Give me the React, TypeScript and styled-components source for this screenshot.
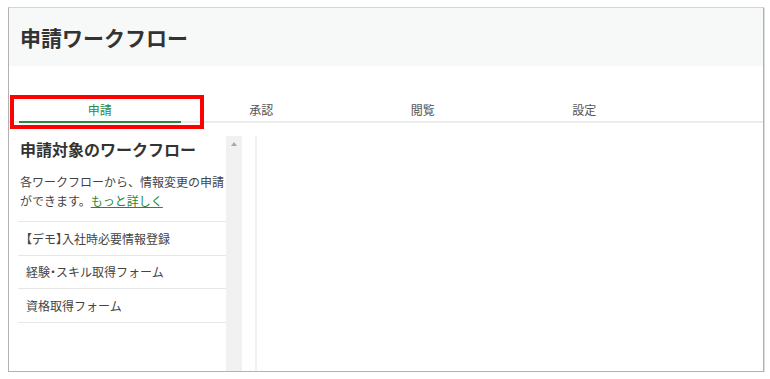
import React, { FC } from 'react';
import styled, { createGlobalStyle } from 'styled-components';

const GlobalStyle = createGlobalStyle`
  html, body {
    margin: 0;
    padding: 0;
    background: #fff;
  }
  body {
    font-family: "Noto Sans CJK JP", "Noto Sans", sans-serif;
    color: #333;
  }
`;

const Frame = styled.div`
  position: relative;
  margin: 7px 0 0 8px;
  width: 756px;
  height: 365px;
  box-sizing: border-box;
  border: 1px solid #b2b2b2;
  border-top-color: #d4d4d4;
  box-shadow: 1px 1px 0 #dcdcdc;
  display: flex;
  flex-direction: column;
  overflow: hidden;
`;

const Header = styled.div`
  height: 58px;
  background-color: #f7f8f8;
  display: flex;
  align-items: center;
  padding-left: 11px;
`;

const Title = styled.h1`
  margin: 0;
  font-size: 21px;
  font-weight: 700;
  color: #333;
`;

const TabBar = styled.div`
  margin-top: 32px;
  padding-left: 10px;
  display: flex;
  border-bottom: 2px solid #ececec;
`;

const Tab = styled.div<{ $active?: boolean }>`
  width: 161.5px;
  height: 25px;
  box-sizing: border-box;
  display: flex;
  align-items: center;
  justify-content: center;
  font-size: 12px;
  color: ${({ $active }) => ($active ? '#2b8a3e' : '#555')};
  border-bottom: 2px solid ${({ $active }) => ($active ? '#2b8a3e' : 'transparent')};
  margin-bottom: -2px;
`;

const Highlight = styled.div`
  position: absolute;
  left: 1px;
  top: 87px;
  width: 194px;
  height: 34px;
  box-sizing: border-box;
  border: 4px solid #ff0000;
  pointer-events: none;
`;

const Body = styled.div`
  flex: 1;
  display: flex;
  padding: 13px 0 0 9px;
  min-height: 0;
`;

const Sidebar = styled.div`
  display: flex;
`;

const SideContent = styled.div`
  width: 208px;
`;

const SideHeading = styled.h2`
  margin: 1px 0 0 2px;
  font-size: 16px;
  line-height: 24px;
  font-weight: 700;
  color: #333;
`;

const Description = styled.p`
  margin: 0;
  padding: 11px 0 11px 2px;
  font-size: 12px;
  line-height: 19px;
  color: #444;
  border-bottom: 1px solid #e6e6e6;
`;

const MoreLink = styled.a`
  color: #1f8a3a;
  text-decoration: underline;
`;

const Item = styled.div`
  height: 32.5px;
  display: flex;
  align-items: center;
  padding-left: 8px;
  font-size: 12px;
  color: #444;
  font-feature-settings: "halt";
  border-bottom: 1px solid #e6e6e6;
`;

const Scrollbar = styled.div`
  width: 16px;
  background-color: #f1f1f1;
  display: flex;
  justify-content: center;
  padding-top: 6px;
  box-sizing: border-box;
`;

const ArrowUp = styled.div`
  width: 0;
  height: 0;
  border-left: 3.5px solid transparent;
  border-right: 3.5px solid transparent;
  border-bottom: 4px solid #a8a8a8;
`;

const Divider = styled.div`
  width: 2px;
  margin-left: 13px;
  background-color: #f1f1f1;
`;

const Main = styled.div`
  flex: 1;
`;

interface Workflow {
  name: string;
}

const workflows: Workflow[] = [
  { name: '【デモ】入社時必要情報登録' },
  { name: '経験・スキル取得フォーム' },
  { name: '資格取得フォーム' },
];

const tabs = ['申請', '承認', '閲覧', '設定'];

const App: FC = () => {
  return (
    <>
      <GlobalStyle />
      <Frame>
        <Header>
          <Title>申請ワークフロー</Title>
        </Header>
        <TabBar>
          {tabs.map((t, i) => (
            <Tab key={t} $active={i === 0}>{t}</Tab>
          ))}
        </TabBar>
        <Highlight />
        <Body>
          <Sidebar>
            <SideContent>
              <SideHeading>申請対象のワークフロー</SideHeading>
              <Description>
                各ワークフローから、情報変更の申請ができます。<MoreLink href="#">もっと詳しく</MoreLink>
              </Description>
              {workflows.map((w, i) => (
                <Item key={i}>{w.name}</Item>
              ))}
            </SideContent>
            <Scrollbar>
              <ArrowUp />
            </Scrollbar>
          </Sidebar>
          <Divider />
          <Main />
        </Body>
      </Frame>
    </>
  );
};

export default App;
